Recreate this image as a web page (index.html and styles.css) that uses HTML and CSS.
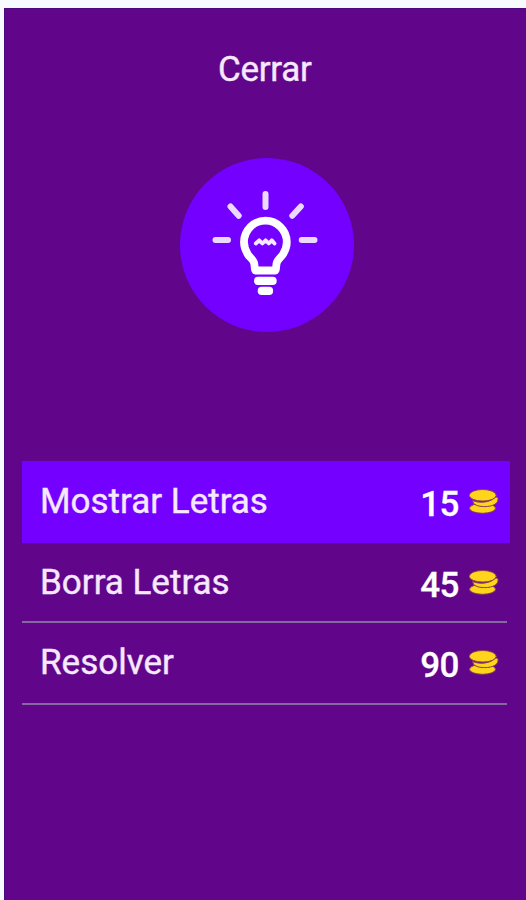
FILE: index.html
```html
<!DOCTYPE html>
<html lang="es">
<head>
<meta charset="utf-8">
<title>Pistas</title>
<link rel="stylesheet" href="styles.css">
</head>
<body>
<svg class="defs" width="0" height="0">
	<symbol id="coins" viewBox="0 0 30 25">
		<ellipse class="coin" cx="13.500" cy="19.300" rx="13" ry="5"/>
		<path class="coin" d="M3.800 11.500c6 3 17 2 21.500-2.500 1-1.200 3.200-1.200 3.700 0 .8 5.500-5 8.600-13.500 8.600-6.500 0-12-2-11.700-6.100z"/>
		<ellipse class="coin" cx="13.700" cy="6.300" rx="13.500" ry="5.800"/>
	</symbol>
</svg>
<div class="screen">
	<a class="close">Cerrar</a>
	<div class="bulb">
		<svg viewBox="0 0 174 174" width="174" height="174">
			<g class="rays">
				<path d="M85.500 36v13M35.500 82H48M121.700 82h12.800M50.500 48.500L58.700 57.700M120.800 48.500L112.300 57.700"/>
			</g>
			<path class="glass" d="M75.300 112.500h20.200c1-2.700.4-5.700 1.500-8.500 1.200-2.900 4-4.500 6-7.700 2.400-3.800 3.800-7.800 3.800-12.200a21.400 21.400 0 0 0-42.800 0c0 4.400 1.400 8.400 3.800 12.200 2 3.200 4.800 4.800 6 7.700 1.100 2.800.5 5.800 1.500 8.500z"/>
			<path class="filament" d="M75.800 85.500l3.400-3.200 3.200 3.200 3.200-3.200 3.200 3.200 3-3.200 2.700 3.200"/>
			<rect class="base" x="74" y="118.800" width="22.700" height="8.200" rx="4"/>
			<rect class="base" x="77.700" y="128.800" width="15.400" height="8.200" rx="4"/>
		</svg>
	</div>
	<div class="list">
		<div class="row active">
			<span class="name">Mostrar Letras</span>
			<span class="price">15</span>
			<svg class="coins" width="30" height="25"><use href="#coins"/></svg>
		</div>
		<div class="row">
			<span class="name">Borra Letras</span>
			<span class="price">45</span>
			<svg class="coins" width="30" height="25"><use href="#coins"/></svg>
		</div>
		<div class="row last">
			<span class="name">Resolver</span>
			<span class="price">90</span>
			<svg class="coins" width="30" height="25"><use href="#coins"/></svg>
		</div>
	</div>
</div>
</body>
</html>
```
FILE: styles.css
```css
*
{
box-sizing: border-box;
}
body
{
margin: 0;
height: 900px;
overflow: hidden;
padding: 8px 0 0 4px;
background-color: #f7faff;
font-family: Roboto, "Liberation Sans", sans-serif;
color: #f6e8ff;
}
.defs{
display: block;
}
.screen
{
height: 892px;
background-color: #61068b;
border-top: 1px solid #4b0880;
border-left: 1px solid #4b0880;
display: flex;
flex-direction: column;
}
.close{
margin: 40px 0 0 213px;
height: 41px;
line-height: 42px;
font-size: 35px;
letter-spacing: -.3px;
-webkit-text-stroke: .4px #f6e8ff;
}
.bulb
{
width: 174px;
height: 174px;
margin: 68px 0 0 175px;
border-radius: 50%;
background-color: #7400ff;
}
.bulb svg{
display: block;
}
.rays{
fill: none;
stroke: #ecd9ff;
stroke-width: 6;
stroke-linecap: round;
}
.glass{
fill: none;
stroke: #ffffff;
stroke-width: 7.8;
stroke-linejoin: round;
}
.filament{
fill: none;
stroke: #f4eaff;
stroke-width: 3.8;
stroke-linecap: round;
stroke-linejoin: round;
}
.base{
fill: #ffffff;
}
.list
{
margin: 129px 16px 0 17px;
}
.row
{
display: flex;
align-items: flex-start;
width: 485px;
height: 80px;
padding: 18px 8px 0 18px;
border-bottom: 2px solid #85689f;
line-height: 42px;
}
.active
{
width: 488px;
height: 82px;
padding: 19px 11px 0 18px;
border-bottom: none;
background-color: #7400ff;
}
.last{
height: 82px;
}
.name{
flex: 1;
margin-top: 1px;
font-size: 35px;
-webkit-text-stroke: .4px #f6e8ff;
}
.price
{
margin: 4px 10px 0 0;
font-size: 35px;
font-weight: 500;
letter-spacing: -.5px;
color: #ffffff;
-webkit-text-stroke: .3px #ffffff;
}
.coins
{
margin-top: 9px;
}
.coin
{
fill: #ffd51c;
stroke: #8a3c55;
stroke-width: 1;
}
```
